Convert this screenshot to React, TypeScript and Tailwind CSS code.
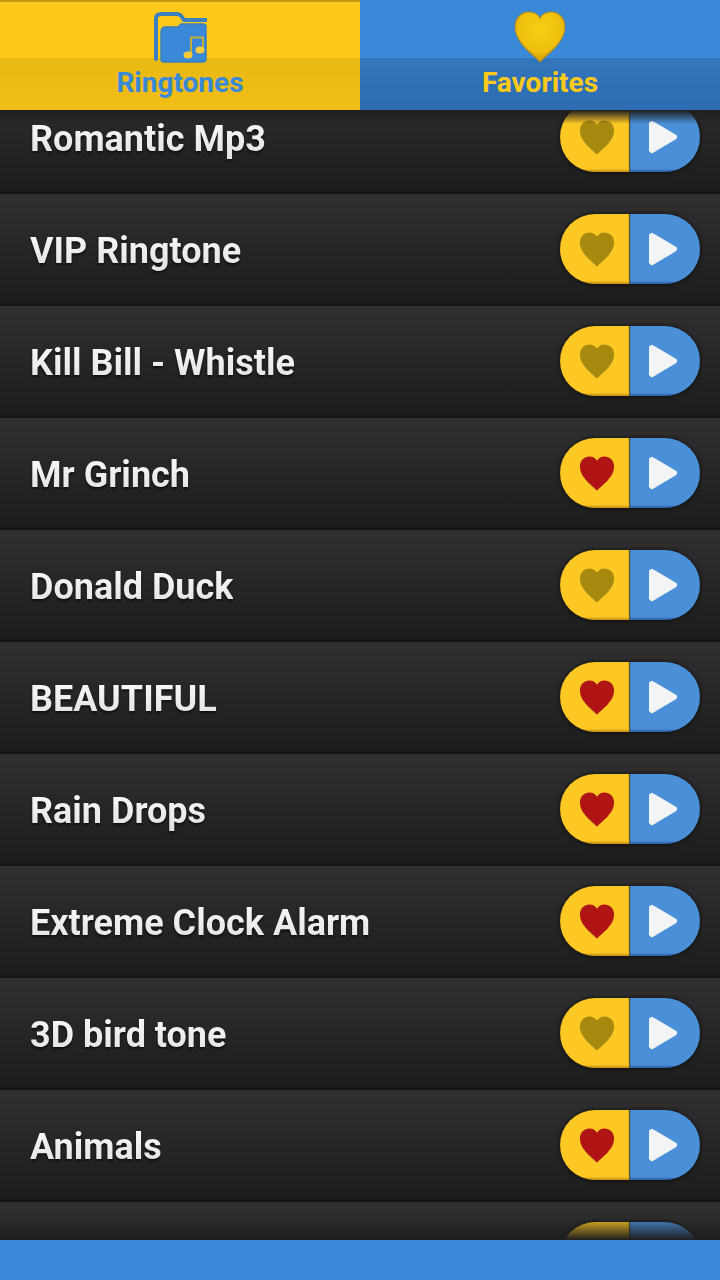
const ringtones = [
  { name: "Romantic Mp3", liked: false },
  { name: "VIP Ringtone", liked: false },
  { name: "Kill Bill - Whistle", liked: false },
  { name: "Mr Grinch", liked: true },
  { name: "Donald Duck", liked: false },
  { name: "BEAUTIFUL", liked: true },
  { name: "Rain Drops", liked: true },
  { name: "Extreme Clock Alarm", liked: true },
  { name: "3D bird tone", liked: false },
  { name: "Animals", liked: true },
  { name: "", liked: false },
];

const HEART =
  "M26 50 C20 43 2 32 2 16 C2 7 9 2 15 2 C20 2 24 4 26 8 C28 4 32 2 37 2 C43 2 50 7 50 16 C50 32 32 43 26 50 Z";

function FolderIcon() {
  return (
    <svg width="54" height="52" viewBox="0 0 54 52" className="relative">
      <path
        d="M3 48 V7 Q3 2 8 2 H24 Q27 2 29 5 L31 8 H54"
        fill="none"
        stroke="#3a7fbf"
        strokeWidth="4"
      />
      <path d="M1 46 H5 L3 50 Z" fill="#3a7fbf" />
      <path
        d="M8 20 Q8 15 13 15 H25 L28 12 H50 Q53 12 53 15 V47 Q53 50 50 50 H11 Q8 50 8 47 Z"
        fill="#3a88d8"
        stroke="#3a7fbf"
        strokeWidth="1.5"
      />
      <path d="M38 42 V25.5 H50 V37" fill="none" stroke="#c2ae3a" strokeWidth="2" />
      <ellipse cx="35" cy="43" rx="4.5" ry="3.6" fill="#f6cc3a" />
      <ellipse cx="47" cy="38" rx="4.5" ry="3.6" fill="#f6cc3a" />
    </svg>
  );
}

function BigHeart() {
  return (
    <svg width="54" height="54" viewBox="0 0 52 52" className="relative">
      <defs>
        <radialGradient id="goldHeart" cx="50%" cy="35%" r="65%">
          <stop offset="0%" stopColor="#f6cf14" />
          <stop offset="65%" stopColor="#efc00e" />
          <stop offset="100%" stopColor="#cf9a08" />
        </radialGradient>
      </defs>
      <path d={HEART} fill="url(#goldHeart)" stroke="#b98f12" strokeWidth="1" />
    </svg>
  );
}

function RowControls({ liked }: { liked: boolean }) {
  return (
    <div className="flex h-[70px] w-[140px] shrink-0 overflow-hidden rounded-full shadow-[0_0_4px_rgba(0,0,0,0.8)]">
      <button
        type="button"
        className="flex w-[70px] items-center justify-center border-r border-[#5d5220] bg-[#fdc823] pl-[5px] shadow-[inset_0_-2px_2px_rgba(120,80,0,0.4)]"
      >
        <svg width="38" height="37" viewBox="0 0 52 52">
          <path d={HEART} fill={liked ? "#b01414" : "#a68a10"} />
        </svg>
      </button>
      <button
        type="button"
        className="flex flex-1 items-center justify-center bg-[#4a90d9] pr-[4px] shadow-[inset_0_-2px_2px_rgba(10,50,110,0.45)]"
      >
        <svg width="32" height="36" viewBox="0 0 32 36">
          <path
            d="M5 5 L27 18 L5 31 Z"
            fill="#f3f4f6"
            stroke="#f3f4f6"
            strokeWidth="6"
            strokeLinejoin="round"
          />
        </svg>
      </button>
    </div>
  );
}

export default function App() {
  return (
    <div className="flex h-[1280px] w-[720px] flex-col overflow-hidden bg-[#1e1e1e] font-['Roboto',sans-serif]">
      <header className="z-10 flex h-[110px] shrink-0">
        <div className="relative flex flex-1 flex-col items-center border-t-2 border-[#c39a10] bg-[#fec91b] pt-[10px]">
          <div className="absolute inset-x-0 bottom-0 h-[52px] bg-gradient-to-b from-[#e8b814] to-[#f2bf16]" />
          <FolderIcon />
          <span className="relative mt-[2px] text-[28px] leading-[34px] font-bold text-[#3a88d8]">
            Ringtones
          </span>
        </div>
        <div className="relative flex flex-1 flex-col items-center bg-[#3a88d8] pt-[10px]">
          <div className="absolute inset-x-0 bottom-0 h-[52px] bg-gradient-to-b from-[#3276bc] to-[#2d6cb0]" />
          <BigHeart />
          <span className="relative mt-[2px] text-[28px] leading-[34px] font-bold text-[#fec91b]">
            Favorites
          </span>
        </div>
      </header>

      <div className="relative min-h-0 flex-1 overflow-hidden">
        <ul className="mt-[-28px]">
          {ringtones.map((tone, index) => (
            <li
              key={index}
              className="flex h-[112px] items-center justify-between border-b-2 border-[#141414] bg-gradient-to-b from-[#303030] to-[#1c1c1c] pr-[20px] pl-[30px]"
            >
              <span className="mt-[4px] bg-gradient-to-b from-white to-[#dcdcdc] bg-clip-text text-[36px] font-bold text-transparent drop-shadow-[0_2px_1px_rgba(0,0,0,0.6)]">
                {tone.name}
              </span>
              <RowControls liked={tone.liked} />
            </li>
          ))}
        </ul>
        {/* scroll fades at both ends of the list */}
        <div className="pointer-events-none absolute inset-x-0 top-0 h-[14px] bg-gradient-to-b from-[#1e1e1e] to-transparent" />
        <div className="pointer-events-none absolute inset-x-0 bottom-0 h-[24px] bg-gradient-to-t from-[#1e1e1e] to-transparent" />
      </div>

      <footer className="z-10 h-[40px] shrink-0 bg-[#3a88d8]" />
    </div>
  );
}
